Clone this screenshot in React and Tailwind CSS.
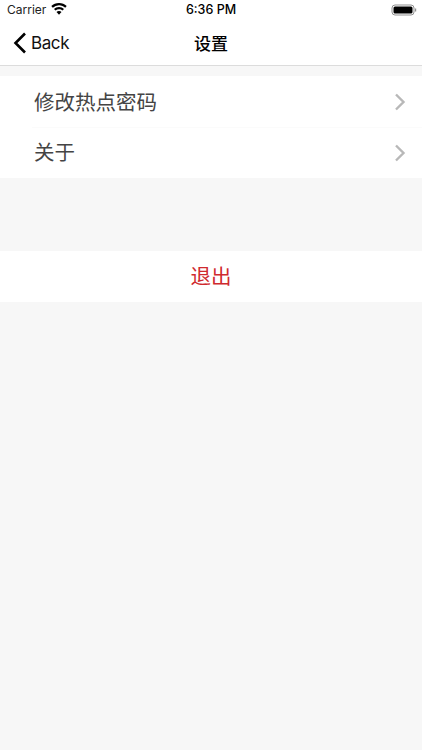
const cjk = "font-['Noto_Sans_CJK_SC','Inter',sans-serif]";

const Chevron = () => (
  <svg width="12" height="18" viewBox="0 0 12 18" fill="none" stroke="#b8b8b8" strokeWidth="2.4">
    <path d="M2 1.5 L9.5 9 L2 16.5" />
  </svg>
);

const StatusBar = () => (
  <div className="flex h-[20px] items-center justify-between pl-[7px] pr-[5px] font-['Inter',sans-serif] text-[12px] text-black">
    <div className="flex w-[120px] items-center gap-[5px]">
      <span className="text-[#222]">Carrier</span>
      <svg width="16" height="12" viewBox="0 0 16 12" fill="black" className="-mt-[3px]">
        <path d="M8 0C5 0 2.300 1.200.3 3.100l1.500 1.600A8.900 8.900 0 0 1 8 2.200c2.400 0 4.600.9 6.200 2.500l1.500-1.600C13.700 1.200 11 0 8 0z" />
        <path d="M8 4C6 4 4.300 4.800 3 6l1.500 1.600A5.100 5.100 0 0 1 8 6.200c1.400 0 2.600.5 3.500 1.400L13 6c-1.300-1.200-3-2-5-2z" />
        <path d="M8 8c-1 0-1.800.4-2.500 1L8 11.800 10.500 9C9.800 8.400 9 8 8 8z" />
      </svg>
    </div>
    <span className="text-[12.5px] font-medium">6:36 PM</span>
    <div className="flex w-[122px] items-center justify-end">
      <svg width="26" height="12" viewBox="0 0 26 12">
        <rect x="1" y="1" width="22" height="10" rx="3" fill="none" stroke="#8f8f8f" />
        <rect x="2.500" y="2.500" width="19" height="7" rx="1.500" fill="black" />
        <rect x="24" y="4.500" width="1.200" height="3" fill="#8f8f8f" />
      </svg>
    </div>
  </div>
);

const NavBar = () => (
  <div className="relative flex h-[46px] items-center border-b border-[#dcdcdc]">
    <div className="flex items-center pl-[13px]">
      <svg width="14" height="22" viewBox="0 0 14 22" fill="none" stroke="black" strokeWidth="2.600">
        <path d="M12 1.500 L2.500 11 L12 20.500" />
      </svg>
      <span className="ml-[4px] mt-[2px] font-['Inter',sans-serif] text-[17px] tracking-[-0.4px] text-[#111]">Back</span>
    </div>
    <span className={`absolute left-0 right-0 text-center text-[17px] font-medium text-black ${cjk}`}>设置</span>
  </div>
);

const Row = ({ label, height, textClass }) => (
  <div className={`flex items-center justify-between pl-[34px] pr-[16px] ${height}`}>
    <span className={`text-[20.500px] text-[#444] ${cjk} ${textClass}`}>{label}</span>
    <Chevron />
  </div>
);

export default function App() {
  return (
    <div className="flex h-[750px] w-[422px] flex-col overflow-hidden bg-[#f7f7f7]">
      <div className="bg-white">
        <StatusBar />
        <NavBar />
      </div>
      <div className="mt-[10px] bg-white">
        <Row label="修改热点密码" height="h-[51px]" textClass="" />
        <div className="ml-[32px] border-t border-[#fbfbfb]" />
        <Row label="关于" height="h-[50px]" textClass="mb-[3px]" />
      </div>
      <div className={`mt-[73px] flex h-[51px] items-center justify-center bg-white pb-[2px] text-[20.500px] text-[#cf2a2e] ${cjk}`}>
        退出
      </div>
    </div>
  );
}
